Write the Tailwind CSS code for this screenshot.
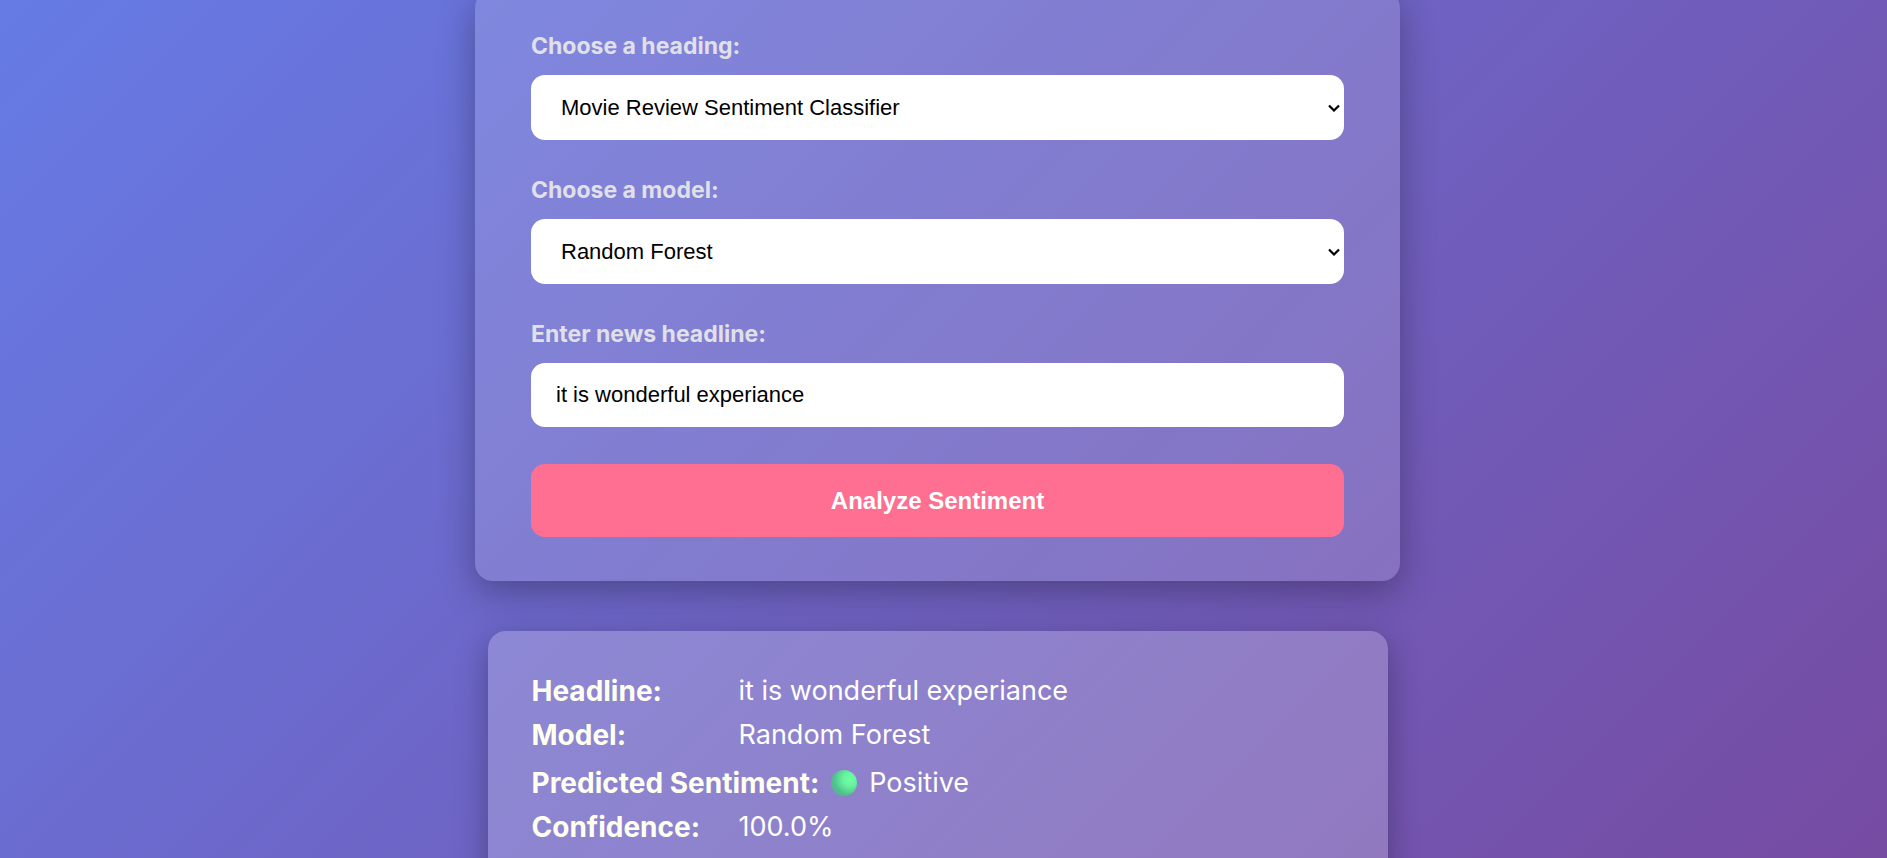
<!DOCTYPE html>
<html lang="en">
<head>
<meta charset="utf-8">
<meta name="viewport" content="width=device-width, initial-scale=1">
<title>Sentiment Classifier</title>
<script src="https://cdn.jsdelivr.net/npm/@tailwindcss/browser@4"></script>
</head>
<body class="font-['Inter',sans-serif] text-white">
<main class="flex h-screen flex-col items-center overflow-hidden bg-[linear-gradient(135deg,#667be5,#764ba2)] pr-3">
  <form class="-mt-2.5 flex w-full max-w-[925px] shrink-0 flex-col rounded-[18px] bg-white/15 px-14 pt-[42px] pb-11 shadow-[0_11px_36px_rgba(0,0,0,0.3)]">
    <label for="heading" class="mb-[15px] text-[23px] leading-7 font-bold text-[#e0e0e8]">Choose a heading:</label>
    <div class="relative mb-9">
      <select id="heading" class="block h-[65px] w-full appearance-none rounded-[14px] bg-white px-[30px] font-['Liberation_Sans',Arial,sans-serif] text-[22px] text-black">
        <option>Movie Review Sentiment Classifier</option>
      </select>
      <svg class="pointer-events-none absolute top-1/2 right-1 h-2 w-3 -translate-y-1/2" viewBox="0 0 12 8" fill="none" stroke="#000" stroke-width="2.2" aria-hidden="true"><path d="M1 1.500 6 6.500 11 1.500"/></svg>
    </div>
    <label for="model" class="mb-[15px] text-[23px] leading-7 font-bold text-[#e0e0e8]">Choose a model:</label>
    <div class="relative mb-9">
      <select id="model" class="block h-[65px] w-full appearance-none rounded-[14px] bg-white px-[30px] font-['Liberation_Sans',Arial,sans-serif] text-[22px] text-black">
        <option>Random Forest</option>
      </select>
      <svg class="pointer-events-none absolute top-1/2 right-1 h-2 w-3 -translate-y-1/2" viewBox="0 0 12 8" fill="none" stroke="#000" stroke-width="2.2" aria-hidden="true"><path d="M1 1.500 6 6.500 11 1.500"/></svg>
    </div>
    <label for="headline" class="mb-[15px] text-[23px] leading-7 font-bold text-[#e0e0e8]">Enter news headline:</label>
    <input id="headline" type="text" value="it is wonderful experiance" class="mb-[37px] h-16 w-full rounded-[14px] bg-white px-[25px] font-['Liberation_Sans',Arial,sans-serif] text-[22px] text-black">
    <button type="button" class="h-[73px] w-full rounded-[14px] bg-[#ff6f91] font-['Liberation_Sans',Arial,sans-serif] text-[24px] font-bold text-white">Analyze Sentiment</button>
  </form>

  <section class="mt-[50px] w-full max-w-[900px] shrink-0 rounded-[18px] bg-white/22 px-11 py-11 shadow-[0_9px_32px_rgba(0,0,0,0.3)]">
    <dl class="flex flex-col gap-3 text-[27px] leading-8">
      <div class="flex gap-3">
        <dt class="min-w-[195px] text-[28px] leading-8 font-bold text-[#fffff0]">Headline:</dt>
        <dd>it is wonderful experiance</dd>
      </div>
      <div class="flex gap-3">
        <dt class="min-w-[195px] text-[28px] leading-8 font-bold text-[#fffff0]">Model:</dt>
        <dd>Random Forest</dd>
      </div>
      <div class="flex h-9 items-end gap-3">
        <dt class="min-w-[195px] text-[28px] leading-8 font-bold text-[#fffff0]">Predicted Sentiment:</dt>
        <dd class="flex items-center gap-3">
          <svg class="size-[26px]" viewBox="0 0 26 26" aria-hidden="true">
            <defs>
              <radialGradient id="ball" cx="0.72" cy="0.35" r="0.78">
                <stop offset="0" stop-color="#6fffa6"/>
                <stop offset="0.35" stop-color="#66f29e"/>
                <stop offset="0.75" stop-color="#50c48c"/>
                <stop offset="1" stop-color="#5cae98"/>
              </radialGradient>
            </defs>
            <circle cx="13" cy="13" r="13" fill="url(#ball)"/>
          </svg>
          Positive
        </dd>
      </div>
      <div class="flex gap-3">
        <dt class="min-w-[195px] text-[28px] leading-8 font-bold text-[#fffff0]">Confidence:</dt>
        <dd>100.0%</dd>
      </div>
    </dl>
  </section>
</main>
</body>
</html>
